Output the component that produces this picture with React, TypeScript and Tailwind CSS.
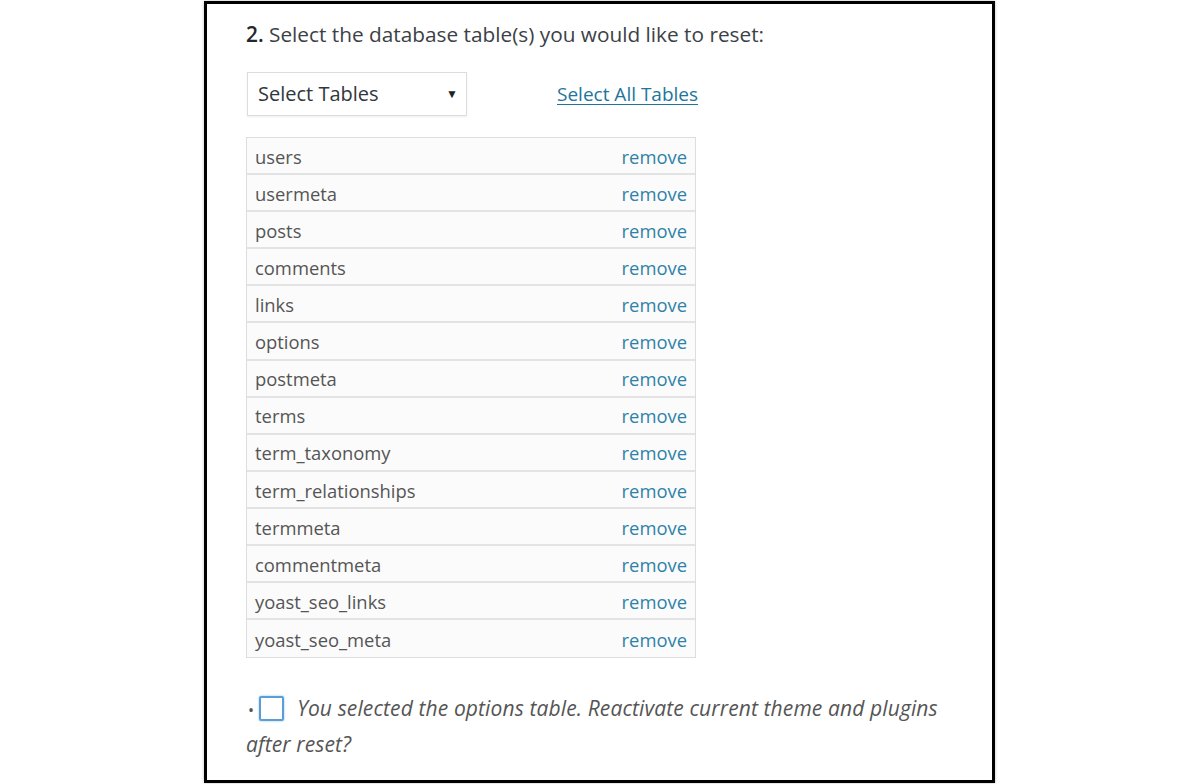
const tables = [
  'users',
  'usermeta',
  'posts',
  'comments',
  'links',
  'options',
  'postmeta',
  'terms',
  'term_taxonomy',
  'term_relationships',
  'termmeta',
  'commentmeta',
  'yoast_seo_links',
  'yoast_seo_meta',
];

export default function App() {
  return (
    <div className="w-[1200px] h-[784px] bg-white pt-[1px] font-['Open_Sans',sans-serif] text-[#444]">
      <div className="ml-[204px] w-[791px] h-[782px] border-[3px] border-black pl-[39px] pt-[16px] shadow-[0_0_3px_rgba(0,0,0,0.25)]">
        <h2 className="text-[20.8px] leading-[28px] text-[#3c4146]">
          <span className="font-semibold text-[#23282d]">2.</span> Select the database table(s) you would like to reset:
        </h2>

        <div className="flex items-center mt-[24px]">
          <div className="w-[220px] h-[44px] ml-[1px] border border-[#ddd] shadow-[0_1px_2px_rgba(0,0,0,0.07)] flex items-center justify-between pl-[10px] pr-[8px] text-[20px] text-[#32373c]">
            <span>Select Tables</span>
            <span className="text-[12px] text-[#222]">▼</span>
          </div>
          <a href="#" className="ml-[90px] text-[19px] text-[#21759b] underline underline-offset-[3px]">
            Select All Tables
          </a>
        </div>

        <div className="mt-[21px] w-[450px] border border-[#ddd]">
          {tables.map((t, i) => (
            <div
              key={t}
              className={`h-[37.1px] flex items-center justify-between bg-[#fbfbfb] pl-[8px] pr-[8px] pt-[2px] text-[18.4px] ${
                i < tables.length - 1 ? 'border-b-2 border-[#e3e3e3]' : ''
              }`}
            >
              <span className="text-[#555]">{t}</span>
              <span className="text-[#2e82a8]">remove</span>
            </div>
          ))}
        </div>

        <div className="mt-[32px] w-[700px] text-[21px] leading-[36px] italic text-[#555] tracking-[0.12px]">
          <span className="not-italic text-[16px] leading-[0] ml-[2px] mr-[5px]">•</span>
          <span className="inline-block w-[25px] h-[25px] border-2 border-[#5b9dd9] rounded-[2px] align-[-5px] mr-[13px] shadow-[0_0_2px_rgba(30,140,190,0.6)]" />
          You selected the options table. Reactivate current theme and plugins
          <br />
          after reset?
        </div>
      </div>
    </div>
  );
}
